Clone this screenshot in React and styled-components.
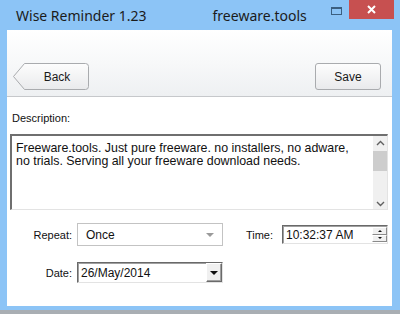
import React from "react";
import styled, { createGlobalStyle } from "styled-components";

const GlobalStyle = createGlobalStyle`
  html, body {
    margin: 0;
    padding: 0;
    background: #8cc4f6;
  }
  * {
    box-sizing: border-box;
  }
`;

const Window = styled.div`
  width: 400px;
  height: 314px;
  background: #8cc4f6;
  display: flex;
  flex-direction: column;
  font-family: "Liberation Sans", Arial, sans-serif;
  overflow: hidden;
`;

const TitleBar = styled.div`
  height: 30px;
  display: flex;
  align-items: flex-start;
`;

const TitleText = styled.div`
  font-family: "Noto Sans", "Open Sans", sans-serif;
  font-size: 14px;
  color: #1b1b1b;
  margin-top: 6px;
  margin-left: ${(props) => props.left}px;
  white-space: nowrap;
`;

const TitleControls = styled.div`
  margin-left: auto;
  margin-right: 6px;
  display: flex;
  align-items: flex-start;
`;

const MaxIcon = styled.div`
  width: 11px;
  height: 8px;
  margin-top: 7px;
  margin-right: 7px;
  border: 1px solid #3b5f80;
  border-top-width: 2px;
`;

const CloseButton = styled.div`
  width: 45px;
  height: 19px;
  background: #c75050;
  display: flex;
  align-items: center;
  justify-content: center;
`;

const Client = styled.div`
  margin: 0 8px 0 7px;
  height: 276px;
  background: #fff;
  display: flex;
  flex-direction: column;
`;

const Toolbar = styled.div`
  height: 67px;
  background: linear-gradient(#ffffff 0%, #f7f8f9 50%, #eef0f2 100%);
  border-bottom: 1px solid #c6c8cb;
  display: flex;
  align-items: flex-end;
  justify-content: space-between;
  padding: 0 11px 6px 6px;
`;

const ToolButton = styled.div`
  position: relative;
  height: 27px;
  width: ${(props) => props.width}px;
  display: flex;
  align-items: center;
  justify-content: center;
  font-size: 12px;
  color: #1a1a1a;
  padding-left: ${(props) => (props.arrow ? 12 : 0)}px;
  border: ${(props) => (props.arrow ? "none" : "1px solid #a9abae")};
  border-radius: 3px;
  background: ${(props) =>
    props.arrow ? "transparent" : "linear-gradient(#fdfdfd, #e9eaec)"};
`;

const ButtonShape = styled.svg`
  position: absolute;
  left: 0;
  top: 0;
`;

const ButtonLabel = styled.span`
  position: relative;
`;

const Content = styled.div`
  padding: 0 4px 0 3px;
  display: flex;
  flex-direction: column;
`;

const FieldLabel = styled.div`
  font-size: 11px;
  line-height: 14px;
  color: #111;
  padding-left: ${(props) => props.indent || 0}px;
  margin-top: ${(props) => props.top || 0}px;
`;

const TextArea = styled.div`
  margin-top: 9px;
  height: 76px;
  border: 1px solid #e3e3e3;
  border-top: 2px solid #6f6f6f;
  border-left: 2px solid #6f6f6f;
  display: flex;
`;

const TextBody = styled.div`
  flex: 1;
  padding: 6px 22px 0 4px;
  font-size: 12.4px;
  line-height: 13px;
  color: #111;
`;

const ScrollBar = styled.div`
  width: 14px;
  background: #f0f0f0;
  display: flex;
  flex-direction: column;
  align-items: center;
  padding: 4px 0 2px;
`;

const Thumb = styled.div`
  width: 14px;
  height: 20px;
  background: #cdcdcd;
  margin-top: 5px;
`;

const Spacer = styled.div`
  flex: 1;
`;

const Row = styled.div`
  display: flex;
  align-items: center;
  margin-top: ${(props) => props.top}px;
`;

const RowLabel = styled.div`
  width: 62px;
  margin-right: 5px;
  text-align: right;
  font-size: 11px;
  color: #111;
`;

const Combo = styled.div`
  width: 146px;
  height: 23px;
  border: 1px solid #c3c3c3;
  display: flex;
  align-items: center;
  padding: 0 8px;
  font-size: 12px;
  color: #111;
`;

const ComboArrow = styled.div`
  margin-left: auto;
  width: 0;
  height: 0;
  border-left: 4px solid transparent;
  border-right: 4px solid transparent;
  border-top: 4px solid #9a9a9a;
`;

const TimeGroup = styled.div`
  margin-left: auto;
  display: flex;
  align-items: center;
`;

const TimeLabel = styled.div`
  font-size: 11px;
  color: #111;
  margin-right: 9px;
`;

const SunkenBox = styled.div`
  width: ${(props) => props.width}px;
  height: ${(props) => props.height}px;
  border-top: 1px solid #696969;
  border-left: 1px solid #696969;
  border-right: 1px solid #e3e3e3;
  border-bottom: 1px solid #e3e3e3;
  box-shadow: inset 1px 1px 0 #a0a0a0;
  display: flex;
  align-items: stretch;
  font-size: 12px;
  color: #111;
`;

const BoxText = styled.div`
  flex: 1;
  display: flex;
  align-items: center;
  padding-left: 3px;
`;

const Spinner = styled.div`
  width: 15px;
  display: flex;
  flex-direction: column;
  padding: 1px 0;
`;

const SpinHalf = styled.div`
  flex: 1;
  background: #f0f0f0;
  border: 1px solid #fff;
  border-right-color: #8a8a8a;
  border-bottom-color: #8a8a8a;
  display: flex;
  align-items: center;
  justify-content: center;
`;

const Tri = styled.div`
  width: 0;
  height: 0;
  border-left: ${(props) => props.size}px solid transparent;
  border-right: ${(props) => props.size}px solid transparent;
  ${(props) =>
    props.up
      ? `border-bottom: ${props.size}px solid #111;`
      : `border-top: ${props.size}px solid #111;`}
`;

const DropButton = styled.div`
  width: 16px;
  background: #f0f0f0;
  border: 1px solid #fff;
  border-right-color: #6a6a6a;
  border-bottom-color: #6a6a6a;
  box-shadow: inset -1px -1px 0 #a0a0a0;
  display: flex;
  align-items: center;
  justify-content: center;
`;

const BottomEdge = styled.div`
  margin-top: 4px;
  height: 4px;
  background: #a9aeb3;
`;

const Chevron = ({ up }) => (
  <svg width="9" height="6" viewBox="0 0 9 6">
    <path
      d={up ? "M1 5 L4.5 1.5 L8 5" : "M1 1 L4.5 4.5 L8 1"}
      fill="none"
      stroke="#606060"
      strokeWidth="1.4"
    />
  </svg>
);

export default function App() {
  return (
    <Window>
      <GlobalStyle />
      <TitleBar>
        <TitleText left={16}>Wise Reminder 1.23</TitleText>
        <TitleText left={66}>freeware.tools</TitleText>
        <TitleControls>
          <MaxIcon />
          <CloseButton>
            <svg width="9" height="9" viewBox="0 0 9 9">
              <path d="M1 1 L8 8 M8 1 L1 8" stroke="#fff" strokeWidth="2" />
            </svg>
          </CloseButton>
        </TitleControls>
      </TitleBar>

      <Client>
        <Toolbar>
          <ToolButton arrow width={76}>
            <ButtonShape width="76" height="27" viewBox="0 0 76 27">
              <defs>
                <linearGradient id="bk" x1="0" y1="0" x2="0" y2="1">
                  <stop offset="0" stopColor="#fdfdfd" />
                  <stop offset="1" stopColor="#e9eaec" />
                </linearGradient>
              </defs>
              <path
                d="M11.5 0.5 H72.5 Q75.5 0.5 75.5 3.5 V23.5 Q75.5 26.5 72.5 26.5 H11.5 L0.5 13.5 Z"
                fill="url(#bk)"
                stroke="#a9abae"
              />
            </ButtonShape>
            <ButtonLabel>Back</ButtonLabel>
          </ToolButton>
          <ToolButton width={66}>Save</ToolButton>
        </Toolbar>

        <Content>
          <FieldLabel indent={2} top={14}>
            Description:
          </FieldLabel>
          <TextArea>
            <TextBody>
              Freeware.tools. Just pure freeware. no installers, no adware,
              no trials. Serving all your freeware download needs.
            </TextBody>
            <ScrollBar>
              <Chevron up />
              <Thumb />
              <Spacer />
              <Chevron />
            </ScrollBar>
          </TextArea>

          <Row top={13}>
            <RowLabel>Repeat:</RowLabel>
            <Combo>
              Once
              <ComboArrow />
            </Combo>
            <TimeGroup>
              <TimeLabel>Time:</TimeLabel>
              <SunkenBox width={106} height={19}>
                <BoxText>10:32:37 AM</BoxText>
                <Spinner>
                  <SpinHalf>
                    <Tri up size={2} />
                  </SpinHalf>
                  <SpinHalf>
                    <Tri size={2} />
                  </SpinHalf>
                </Spinner>
              </SunkenBox>
            </TimeGroup>
          </Row>

          <Row top={16}>
            <RowLabel>Date:</RowLabel>
            <SunkenBox width={146} height={21}>
              <BoxText>26/May/2014</BoxText>
              <DropButton>
                <Tri size={4} />
              </DropButton>
            </SunkenBox>
          </Row>
        </Content>
      </Client>
      <BottomEdge />
    </Window>
  );
}
